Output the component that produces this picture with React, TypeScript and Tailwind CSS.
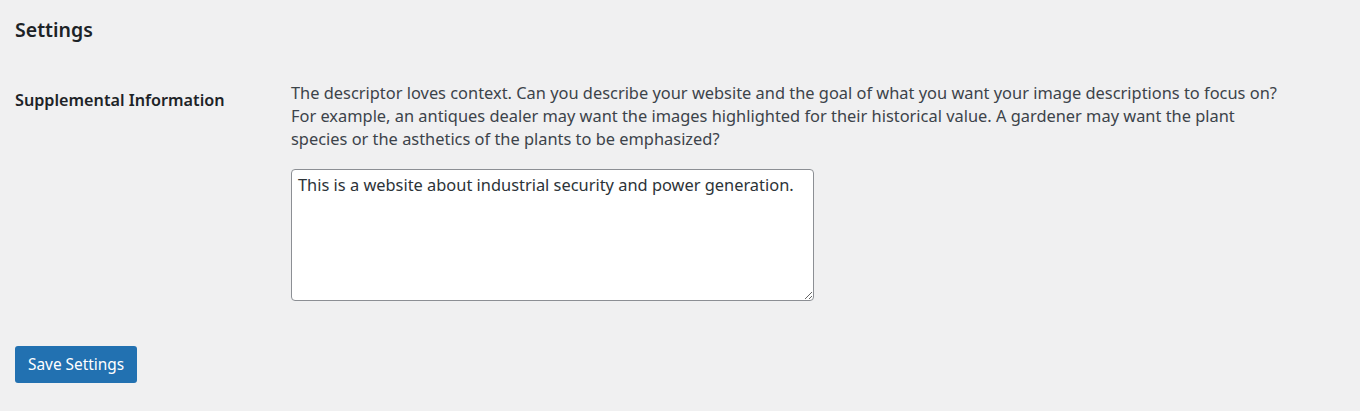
export default function App() {
  return (
    <div className="min-h-[411px] bg-[#f0f0f1] px-[15px] pt-[1px] text-[#3c434a] font-['Noto_Sans',sans-serif]">
      <h2 className="pt-[14px] text-[19.5px] font-semibold leading-[30px] text-[#1d2327]">Settings</h2>

      <div className="mt-[36px] flex">
        <div className="w-[276px] shrink-0 pt-[8px] text-[16.2px] font-semibold leading-[23px] text-[#1d2327]">
          Supplemental Information
        </div>
        <div className="flex-1">
          <p className="max-w-[996px] text-[16.4px] leading-[23px]">
            The descriptor loves context. Can you describe your website and the goal of what you want your image
            descriptions to focus on? For example, an antiques dealer may want the images highlighted for their
            historical value. A gardener may want the plant species or the asthetics of the plants to be emphasized?
          </p>
          <textarea
            className="mt-[19px] block h-[132px] w-[523px] rounded-[4px] border border-[#8c8f94] bg-white px-[6px] py-[3px] text-[16.4px] leading-[23px] text-[#2c3338] outline-none"
            defaultValue="This is a website about industrial security and power generation."
          />
        </div>
      </div>

      <button className="mt-[45px] h-[37px] rounded-[3px] bg-[#2271b1] px-[13px] text-[15.4px] text-white">
        Save Settings
      </button>
    </div>
  );
}
